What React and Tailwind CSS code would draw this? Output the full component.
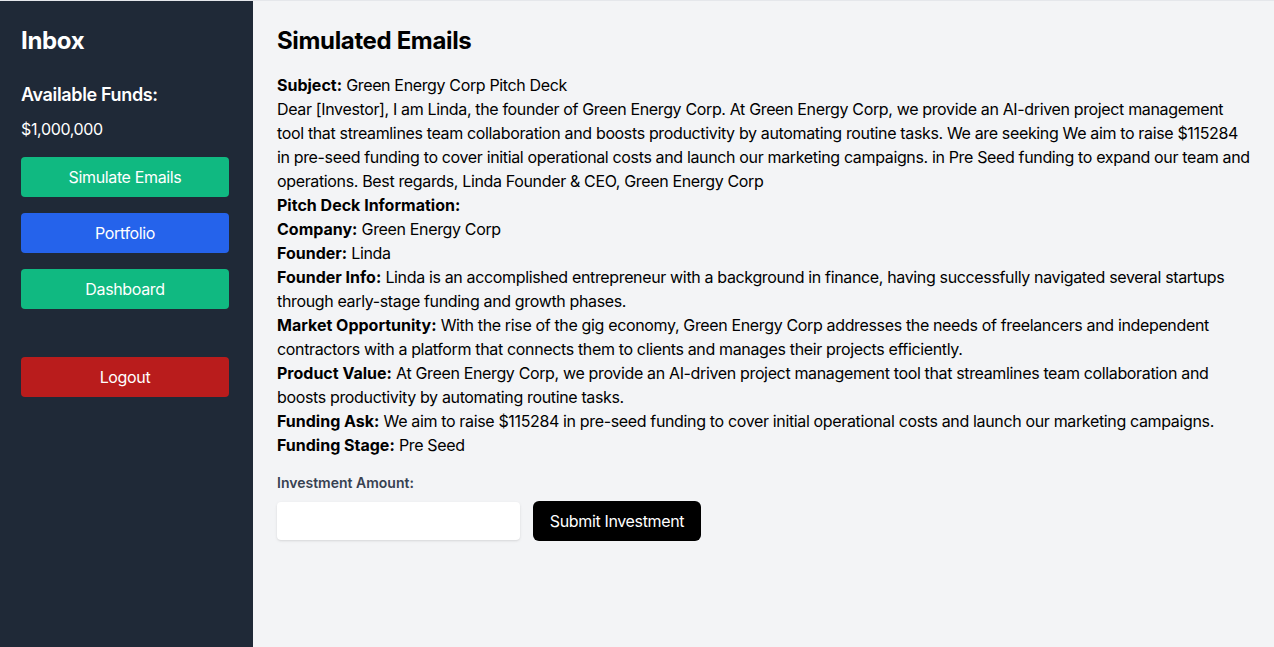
import React, { useState } from "react";

const pitch = {
  company: "Green Energy Corp",
  founder: "Linda",
  founderInfo:
    "Linda is an accomplished entrepreneur with a background in finance, having successfully navigated several startups through early-stage funding and growth phases.",
  market:
    "With the rise of the gig economy, Green Energy Corp addresses the needs of freelancers and independent contractors with a platform that connects them to clients and manages their projects efficiently.",
  product:
    "At Green Energy Corp, we provide an AI-driven project management tool that streamlines team collaboration and boosts productivity by automating routine tasks.",
  ask: "We aim to raise $115284 in pre-seed funding to cover initial operational costs and launch our marketing campaigns.",
  stage: "Pre Seed",
};

const Field = ({ label, children }) => (
  <p>
    <strong className="font-bold tracking-normal">{label}</strong> {children}
  </p>
);

const App = () => {
  const [amount, setAmount] = useState("");

  return (
    <div
      className="flex h-screen border-t border-gray-200 bg-[#f3f4f6] text-black tracking-[-0.022em]"
      style={{ fontFamily: "Inter, 'Noto Sans', sans-serif" }}
    >
      {/* sidebar */}
      <aside className="w-[253px] shrink-0 bg-[#1f2937] px-[21px] pt-6 text-white">
        <h1 className="text-2xl font-bold mb-6">Inbox</h1>
        <h2 className="text-lg font-semibold mb-2">Available Funds:</h2>
        <p className="mb-4">$1,000,000</p>
        <button className="w-[208px] py-2 mb-4 rounded bg-[#10b981] text-white">
          Simulate Emails
        </button>
        <button className="w-[208px] py-2 mb-4 rounded bg-[#2563eb] text-white">
          Portfolio
        </button>
        <button className="w-[208px] py-2 mb-4 rounded bg-[#10b981] text-white">
          Dashboard
        </button>
        <button className="w-[208px] py-2 mt-8 rounded bg-[#b91c1c] text-white">
          Logout
        </button>
      </aside>

      {/* main */}
      <main className="flex-1 p-6 overflow-y-auto">
        <h1 className="text-2xl font-bold mb-4">Simulated Emails</h1>
        <div className="leading-6">
          <Field label="Subject:">Green Energy Corp Pitch Deck</Field>
          <p>
            Dear [Investor], I am Linda, the founder of Green Energy Corp. At
            Green Energy Corp, we provide an AI-driven project management tool
            that streamlines team collaboration and boosts productivity by
            automating routine tasks. We are seeking We aim to raise $115284 in
            pre-seed funding to cover initial operational costs and launch our
            marketing campaigns. in Pre Seed funding to expand our team and
            operations. Best regards, Linda Founder &amp; CEO, Green Energy Corp
          </p>
          <p className="font-bold tracking-normal">Pitch Deck Information:</p>
          <Field label="Company:">{pitch.company}</Field>
          <Field label="Founder:">{pitch.founder}</Field>
          <Field label="Founder Info:">{pitch.founderInfo}</Field>
          <Field label="Market Opportunity:">{pitch.market}</Field>
          <Field label="Product Value:">{pitch.product}</Field>
          <Field label="Funding Ask:">{pitch.ask}</Field>
          <Field label="Funding Stage:">{pitch.stage}</Field>
        </div>

        <div className="mt-4">
          <label className="block text-sm font-semibold tracking-normal text-[#374151] mb-2">
            Investment Amount:
          </label>
          <div className="flex items-center gap-[13px]">
            <input
              type="number"
              value={amount}
              onChange={(e) => setAmount(e.target.value)}
              className="w-[243px] h-[38px] px-3 rounded bg-white shadow outline-none"
            />
            <button className="h-10 w-[168px] rounded-md bg-black text-white">
              Submit Investment
            </button>
          </div>
        </div>
      </main>
    </div>
  );
};

export default App;
